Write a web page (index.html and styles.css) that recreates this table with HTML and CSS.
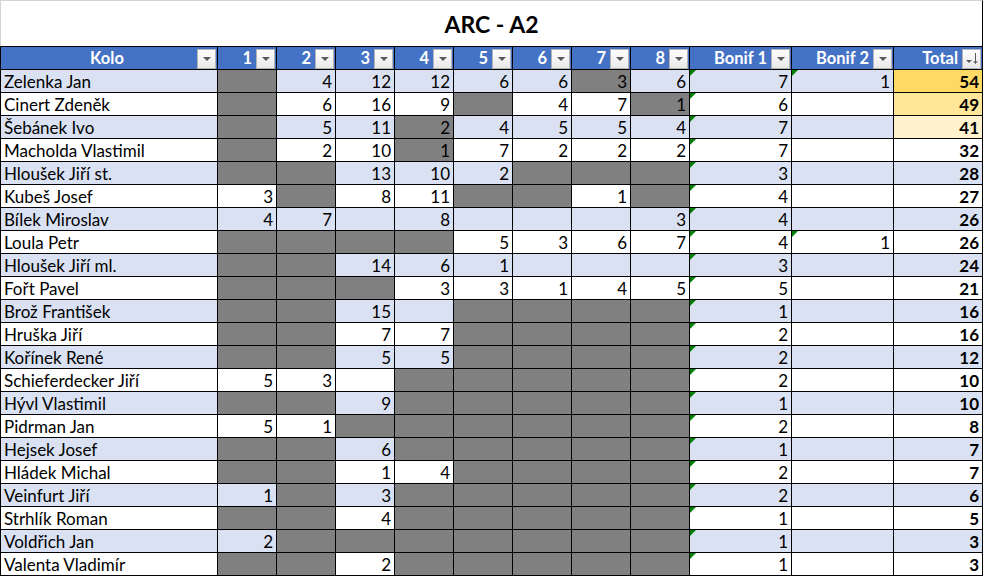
FILE: index.html
```html
<!DOCTYPE html>
<html lang="cs">
<head>
<meta charset="utf-8">
<title>ARC - A2</title>
<link rel="stylesheet" href="styles.css">
</head>
<body>
<div class="sheet">
  <div class="title">ARC - A2</div>
  <div class="grid">
    <div class="row head">
      <div class="hc kolo"><span class="lbl">Kolo</span><span class="btn"><i class="tri"></i></span></div>
      <div class="hc"><span class="lbl">1</span><span class="btn"><i class="tri"></i></span></div>
      <div class="hc"><span class="lbl">2</span><span class="btn"><i class="tri"></i></span></div>
      <div class="hc"><span class="lbl">3</span><span class="btn"><i class="tri"></i></span></div>
      <div class="hc"><span class="lbl">4</span><span class="btn"><i class="tri"></i></span></div>
      <div class="hc"><span class="lbl">5</span><span class="btn"><i class="tri"></i></span></div>
      <div class="hc"><span class="lbl">6</span><span class="btn"><i class="tri"></i></span></div>
      <div class="hc"><span class="lbl">7</span><span class="btn"><i class="tri"></i></span></div>
      <div class="hc"><span class="lbl">8</span><span class="btn"><i class="tri"></i></span></div>
      <div class="hc"><span class="lbl">Bonif 1</span><span class="btn"><i class="tri"></i></span></div>
      <div class="hc"><span class="lbl">Bonif 2</span><span class="btn"><i class="tri"></i></span></div>
      <div class="hc"><span class="lbl">Total</span><span class="btn"><svg class="sort" width="17" height="17" viewBox="0 0 17 17"><polygon points="3,10 9,10 6,13" fill="#595959"/><line x1="12.5" y1="3" x2="12.5" y2="13" stroke="#595959" stroke-width="1"/><polyline points="10.5,11 12.5,13.5 14.5,11" fill="none" stroke="#595959" stroke-width="1"/></svg></span></div>
    </div>

    <div class="row b">
      <div class="n">Zelenka Jan</div><div class="g"></div><div>4</div><div>12</div><div>12</div><div>6</div><div>6</div><div class="g">3</div><div>6</div><div class="t">7</div><div class="t">1</div><div class="tot r1">54</div>
    </div>
    <div class="row">
      <div class="n">Cinert Zdeněk</div><div class="g"></div><div>6</div><div>16</div><div>9</div><div class="g"></div><div>4</div><div>7</div><div class="g">1</div><div class="t">6</div><div></div><div class="tot r2">49</div>
    </div>
    <div class="row b">
      <div class="n">Šebánek Ivo</div><div class="g"></div><div>5</div><div>11</div><div class="g">2</div><div>4</div><div>5</div><div>5</div><div>4</div><div class="t">7</div><div></div><div class="tot r3">41</div>
    </div>
    <div class="row">
      <div class="n">Macholda Vlastimil</div><div class="g"></div><div>2</div><div>10</div><div class="g">1</div><div>7</div><div>2</div><div>2</div><div>2</div><div class="t">7</div><div></div><div class="tot">32</div>
    </div>
    <div class="row b">
      <div class="n">Hloušek Jiří st.</div><div class="g"></div><div class="g"></div><div>13</div><div>10</div><div>2</div><div class="g"></div><div class="g"></div><div class="g"></div><div class="t">3</div><div></div><div class="tot">28</div>
    </div>
    <div class="row">
      <div class="n">Kubeš Josef</div><div>3</div><div class="g"></div><div>8</div><div>11</div><div class="g"></div><div class="g"></div><div>1</div><div class="g"></div><div class="t">4</div><div></div><div class="tot">27</div>
    </div>
    <div class="row b">
      <div class="n">Bílek Miroslav</div><div>4</div><div>7</div><div></div><div>8</div><div></div><div></div><div></div><div>3</div><div class="t">4</div><div></div><div class="tot">26</div>
    </div>
    <div class="row">
      <div class="n">Loula Petr</div><div class="g"></div><div class="g"></div><div class="g"></div><div class="g"></div><div>5</div><div>3</div><div>6</div><div>7</div><div class="t">4</div><div class="t">1</div><div class="tot">26</div>
    </div>
    <div class="row b">
      <div class="n">Hloušek Jiří ml.</div><div class="g"></div><div class="g"></div><div>14</div><div>6</div><div>1</div><div></div><div></div><div></div><div class="t">3</div><div></div><div class="tot">24</div>
    </div>
    <div class="row">
      <div class="n">Fořt Pavel</div><div class="g"></div><div class="g"></div><div class="g"></div><div>3</div><div>3</div><div>1</div><div>4</div><div>5</div><div class="t">5</div><div></div><div class="tot">21</div>
    </div>
    <div class="row b">
      <div class="n">Brož František</div><div class="g"></div><div class="g"></div><div>15</div><div></div><div class="g"></div><div class="g"></div><div class="g"></div><div class="g"></div><div class="t">1</div><div></div><div class="tot">16</div>
    </div>
    <div class="row">
      <div class="n">Hruška Jiří</div><div class="g"></div><div class="g"></div><div>7</div><div>7</div><div class="g"></div><div class="g"></div><div class="g"></div><div class="g"></div><div class="t">2</div><div></div><div class="tot">16</div>
    </div>
    <div class="row b">
      <div class="n">Kořínek René</div><div class="g"></div><div class="g"></div><div>5</div><div>5</div><div class="g"></div><div class="g"></div><div class="g"></div><div class="g"></div><div class="t">2</div><div></div><div class="tot">12</div>
    </div>
    <div class="row">
      <div class="n">Schieferdecker Jiří</div><div>5</div><div>3</div><div></div><div class="g"></div><div class="g"></div><div class="g"></div><div class="g"></div><div class="g"></div><div class="t">2</div><div></div><div class="tot">10</div>
    </div>
    <div class="row b">
      <div class="n">Hývl Vlastimil</div><div class="g"></div><div class="g"></div><div>9</div><div class="g"></div><div class="g"></div><div class="g"></div><div class="g"></div><div class="g"></div><div class="t">1</div><div></div><div class="tot">10</div>
    </div>
    <div class="row">
      <div class="n">Pidrman Jan</div><div>5</div><div>1</div><div class="g"></div><div class="g"></div><div class="g"></div><div class="g"></div><div class="g"></div><div class="g"></div><div class="t">2</div><div></div><div class="tot">8</div>
    </div>
    <div class="row b">
      <div class="n">Hejsek Josef</div><div class="g"></div><div class="g"></div><div>6</div><div class="g"></div><div class="g"></div><div class="g"></div><div class="g"></div><div class="g"></div><div class="t">1</div><div></div><div class="tot">7</div>
    </div>
    <div class="row">
      <div class="n">Hládek Michal</div><div class="g"></div><div class="g"></div><div>1</div><div>4</div><div class="g"></div><div class="g"></div><div class="g"></div><div class="g"></div><div class="t">2</div><div></div><div class="tot">7</div>
    </div>
    <div class="row b">
      <div class="n">Veinfurt Jiří</div><div>1</div><div class="g"></div><div>3</div><div class="g"></div><div class="g"></div><div class="g"></div><div class="g"></div><div class="g"></div><div class="t">2</div><div></div><div class="tot">6</div>
    </div>
    <div class="row">
      <div class="n">Strhlík Roman</div><div class="g"></div><div class="g"></div><div>4</div><div class="g"></div><div class="g"></div><div class="g"></div><div class="g"></div><div class="g"></div><div class="t">1</div><div></div><div class="tot">5</div>
    </div>
    <div class="row b">
      <div class="n">Voldřich Jan</div><div>2</div><div class="g"></div><div class="g"></div><div class="g"></div><div class="g"></div><div class="g"></div><div class="g"></div><div class="g"></div><div class="t">1</div><div></div><div class="tot">3</div>
    </div>
    <div class="row">
      <div class="n">Valenta Vladimír</div><div class="g"></div><div class="g"></div><div>2</div><div class="g"></div><div class="g"></div><div class="g"></div><div class="g"></div><div class="g"></div><div class="t">1</div><div></div><div class="tot">3</div>
    </div>
  </div>
</div>
</body>
</html>
```
FILE: styles.css
```css
* { box-sizing: border-box; }
html, body { margin: 0; padding: 0; background: #fff; }
body {
  font-family: Lato, "Noto Sans", "DejaVu Sans", sans-serif;
  font-size: 17px;
  color: #000;
}
.sheet { width: 983px; }
.title {
  height: 46px;
  border-top: 1px solid #d4d4d4;
  border-left: 1px solid #d4d4d4;
  border-right: 1px solid #000;
  display: flex;
  align-items: center;
  justify-content: center;
  font-weight: 700;
  font-size: 23px;
  padding-top: 1px;
}
.grid {
  display: grid;
  grid-template-columns: 216px repeat(8, 58px) 101px 101px 88px;
  grid-auto-rows: 22px;
  gap: 1px;
  padding: 1px;
  background: #000;
}
.row { display: contents; }
.row > div {
  background: #fff;
  text-align: right;
  padding: 0 3px;
  line-height: 23px;
  white-space: nowrap;
  position: relative;
}
.row.b > div { background: #d9e1f2; }
.row > div.n { text-align: left; padding-left: 3px; }
.row > div.g { background: #808080; }
.row > div.tot { font-weight: 700; }
.row > div.r1 { background: #ffd966; }
.row > div.r2 { background: #ffe699; }
.row > div.r3 { background: #fff2cc; }
.row > div.t::before {
  content: "";
  position: absolute;
  left: 0;
  top: 0;
  border-top: 6px solid #008000;
  border-right: 6px solid transparent;
}
.row.head > div.hc {
  background: #4472c4;
  color: #fff;
  font-weight: 700;
  font-size: 16.5px;
  display: flex;
  align-items: center;
  justify-content: flex-end;
  gap: 4px;
  padding: 0 1px 0 0;
}
.row.head > div.kolo { justify-content: space-between; padding-left: 20px; }
.kolo .lbl { flex: 1; text-align: center; }
.btn {
  width: 19px;
  height: 20px;
  margin-top: 1px;
  border: 1px solid #b4b4b4;
  background: linear-gradient(#ffffff, #e8e8e8);
  display: flex;
  align-items: center;
  justify-content: center;
  flex: none;
}
.tri {
  width: 0;
  height: 0;
  border-left: 4px solid transparent;
  border-right: 4px solid transparent;
  border-top: 4px solid #595959;
}
.sort { display: block; }
```
